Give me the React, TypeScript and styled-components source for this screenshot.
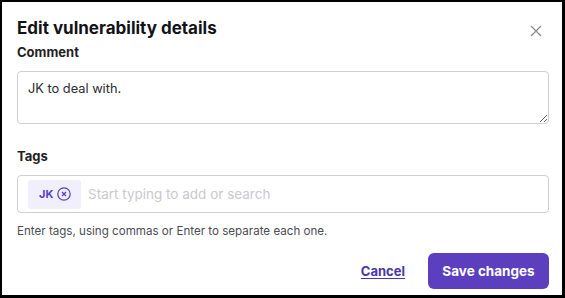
import { FC } from "react";
import styled, { createGlobalStyle } from "styled-components";

const GlobalStyle = createGlobalStyle`
  html, body {
    margin: 0;
    padding: 0;
    background: #000;
  }
  body {
    font-family: Inter, "Noto Sans", sans-serif;
    color: #1b1b1f;
  }
`;

const Frame = styled.div`
  box-sizing: border-box;
  width: 565px;
  height: 298px;
  border-style: solid;
  border-color: #000;
  border-width: 2px 3px 3px 2px;
  background: #fff;
  padding: 15px 13px 0 15px;
  display: flex;
  flex-direction: column;
`;

const Header = styled.div`
  display: flex;
  align-items: flex-start;
  justify-content: space-between;
`;

const Title = styled.h2`
  margin: 0;
  font-size: 17px;
  font-weight: 700;
  line-height: 22px;
  color: #121218;
`;

const CloseButton = styled.button`
  border: none;
  background: none;
  padding: 0;
  margin: 8px 7px 0 0;
  width: 12px;
  height: 12px;
  display: flex;
  cursor: pointer;
`;

const Label = styled.label<{ $top: number }>`
  display: block;
  margin-top: ${(p) => p.$top}px;
  font-size: 13px;
  font-weight: 700;
  line-height: 16px;
  color: #1f1f24;
`;

const TextArea = styled.textarea`
  box-sizing: border-box;
  display: block;
  width: 532px;
  height: 53px;
  margin-top: 11px;
  padding: 8px 10px;
  border: 1px solid #cfcfd4;
  border-radius: 4px;
  font-family: Inter, "Noto Sans", sans-serif;
  font-size: 12.8px;
  line-height: 18px;
  color: #2a2a30;
  resize: vertical;
  outline: none;
`;

const TagBox = styled.div`
  box-sizing: border-box;
  width: 532px;
  height: 38px;
  margin-top: 11px;
  padding: 0 10px;
  border: 1px solid #cfcfd4;
  border-radius: 4px;
  display: flex;
  align-items: center;
  gap: 7px;
`;

const Chip = styled.span`
  box-sizing: border-box;
  width: 53px;
  height: 29px;
  padding: 0 0 0 11px;
  border-radius: 3px;
  background: #f2effd;
  color: #5a3fbf;
  font-size: 11px;
  font-weight: 700;
  display: inline-flex;
  align-items: center;
  gap: 4px;
`;

const TagInput = styled.input`
  flex: 1;
  border: none;
  outline: none;
  padding: 0;
  font-family: Inter, "Noto Sans", sans-serif;
  font-size: 13.5px;
  color: #2a2a30;

  &::placeholder {
    color: #c9c9cf;
  }
`;

const Hint = styled.p`
  margin: 11px 0 0;
  font-size: 11.6px;
  line-height: 15px;
  color: #4c4c55;
`;

const Footer = styled.div`
  margin-top: 14px;
  display: flex;
  justify-content: flex-end;
  align-items: center;
  gap: 23px;
`;

const LinkButton = styled.button`
  border: none;
  background: none;
  padding: 0;
  font-family: Inter, "Noto Sans", sans-serif;
  font-size: 13px;
  font-weight: 700;
  color: #4b37a8;
  text-decoration: underline;
  text-underline-offset: 2px;
  cursor: pointer;
`;

const PrimaryButton = styled.button`
  box-sizing: border-box;
  width: 121px;
  height: 36px;
  border: none;
  border-radius: 6px;
  background: #5c3fbf;
  color: #fff;
  font-family: Inter, "Noto Sans", sans-serif;
  font-size: 13.5px;
  font-weight: 700;
  cursor: pointer;
`;

const CloseIcon: FC = () => (
  <svg width="12" height="12" viewBox="0 0 12 12" fill="none">
    <path d="M1 1L11 11M11 1L1 11" stroke="#8a8a90" strokeWidth="1.2" />
  </svg>
);

const RemoveIcon: FC = () => (
  <svg width="14" height="14" viewBox="0 0 14 14" fill="none">
    <circle cx="7" cy="7" r="6.2" stroke="#5a3fbf" strokeWidth="1.2" />
    <path d="M5 5L9 9M9 5L5 9" stroke="#5a3fbf" strokeWidth="1.3" />
  </svg>
);

const App: FC = () => {
  return (
    <>
      <GlobalStyle />
      <Frame>
        <Header>
          <Title>Edit vulnerability details</Title>
          <CloseButton aria-label="Close">
            <CloseIcon />
          </CloseButton>
        </Header>
        <Label $top={5}>Comment</Label>
        <TextArea defaultValue="JK to deal with." />
        <Label $top={24}>Tags</Label>
        <TagBox>
          <Chip>
            JK
            <RemoveIcon />
          </Chip>
          <TagInput placeholder="Start typing to add or search" />
        </TagBox>
        <Hint>Enter tags, using commas or Enter to separate each one.</Hint>
        <Footer>
          <LinkButton>Cancel</LinkButton>
          <PrimaryButton>Save changes</PrimaryButton>
        </Footer>
      </Frame>
    </>
  );
};

export default App;
